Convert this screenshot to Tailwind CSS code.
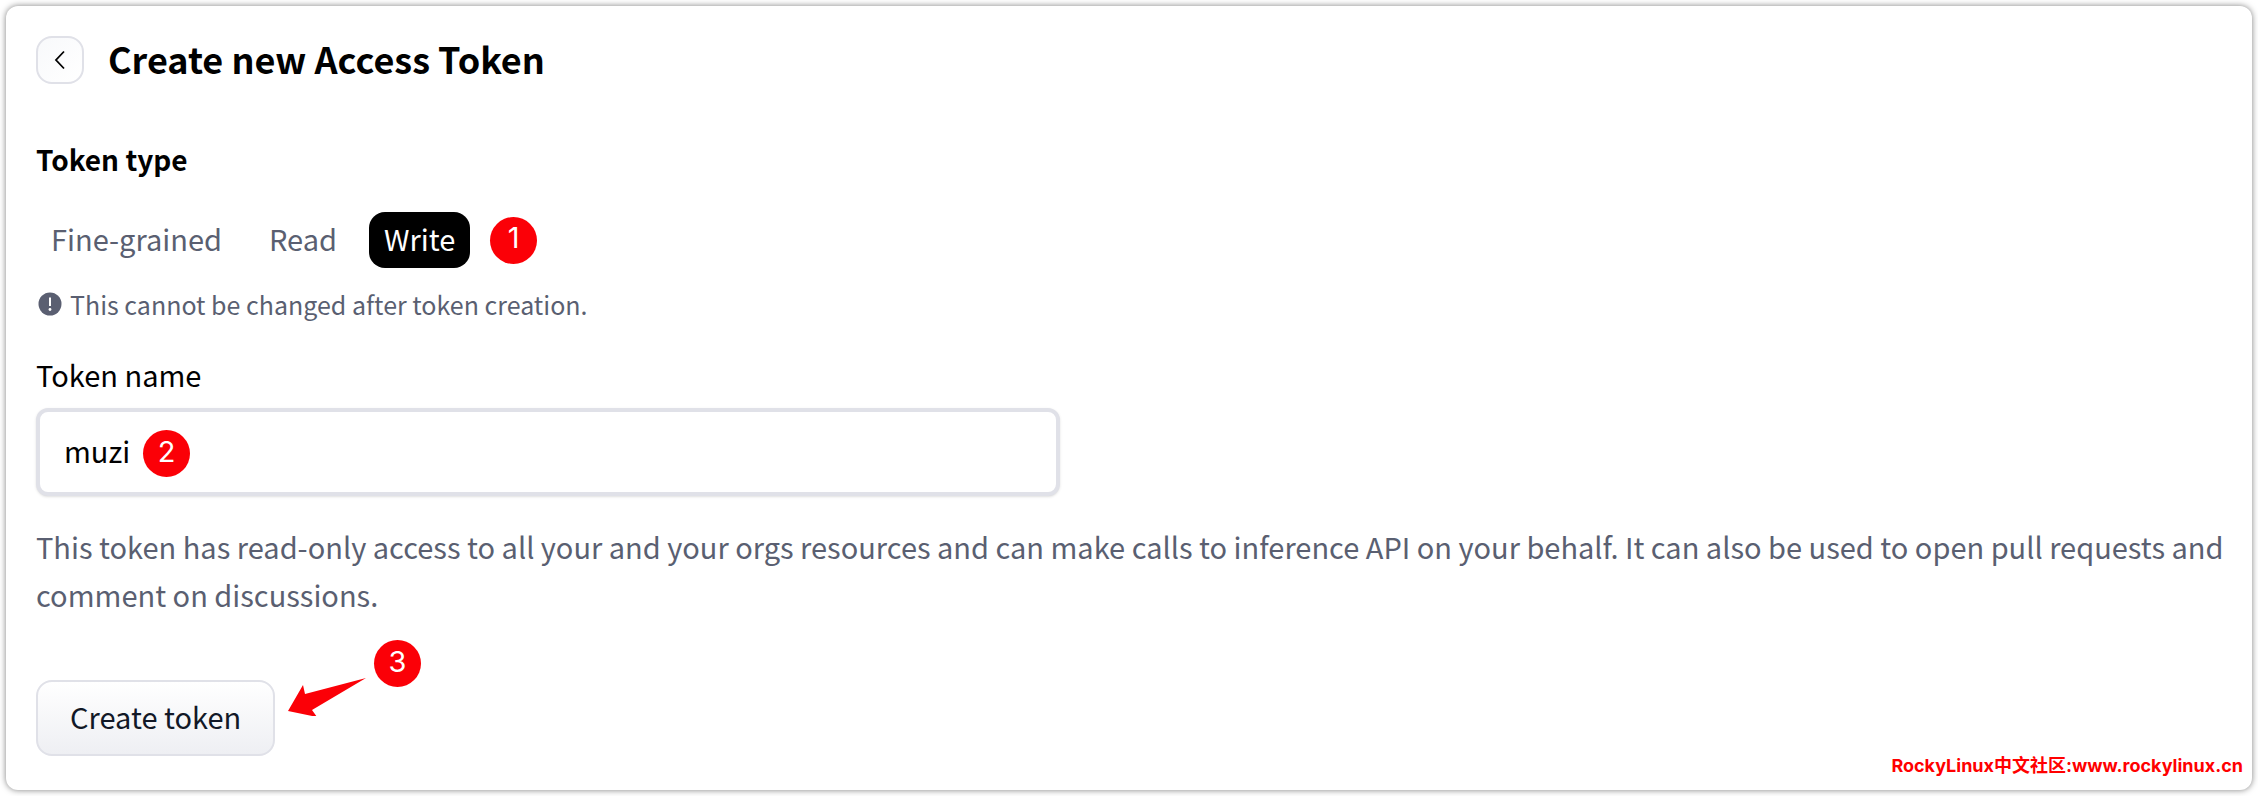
<!DOCTYPE html>
<html lang="en">
<head>
    <meta charset="UTF-8">
    <meta name="viewport" content="width=device-width, initial-scale=1.0">
    <title>Create new Access Token</title>
    <script src="https://cdn.jsdelivr.net/npm/@tailwindcss/browser@4"></script>
</head>
<body class="bg-white min-h-screen p-1.5 font-['Noto_Sans_CJK_SC','Noto_Sans',sans-serif] text-[29px] leading-12 text-black">
    <main class="relative rounded-xl bg-white pt-[30px] pr-6 pb-[34px] pl-[30px] shadow-[0_0_6px_rgba(0,0,0,0.5)]">
        <header class="flex items-center gap-6">
            <a href="#" aria-label="Back" class="flex size-12 items-center justify-center rounded-2xl border-2 border-[#e0e1e8] bg-gradient-to-br from-[#f8f9fb] to-white">
                <svg class="size-6" viewBox="0 0 24 24" fill="none" stroke="black" stroke-width="1.8">
                    <path d="M16 3.5 8 12l8 8.5"/>
                </svg>
            </a>
            <h1 class="pb-1 text-[36px] leading-11 font-bold">Create new Access Token</h1>
        </header>
        <form>
            <h2 class="mt-[51px] text-[28px] leading-12 font-bold">Token type</h2>
            <div class="mt-[29px] flex items-center gap-4">
                <button type="button" class="h-14 rounded-2xl px-[15px] pb-1 text-[#5a5f71]">Fine-grained</button>
                <button type="button" class="h-14 rounded-2xl px-4 pb-1 text-[#5a5f71]">Read</button>
                <button type="button" class="h-14 rounded-2xl bg-black px-[15px] pb-1 text-white">Write</button>
                <span class="ml-1 flex size-[47px] items-center justify-center rounded-full bg-[#fb0007] pb-1 font-[Inter,sans-serif] text-white">1</span>
            </div>
            <p class="mt-4 flex items-center gap-2 text-[25px] leading-10 text-[#5a5f71]">
                <svg class="ml-0.5 size-6" viewBox="0 0 24 24">
                    <circle cx="12" cy="12" r="11.5" fill="#5a5f71"/>
                    <path d="M12 5.5v8.5" stroke="white" stroke-width="2"/>
                    <circle cx="12" cy="17.5" r="1.4" fill="white"/>
                </svg>
                This cannot be changed after token creation.
            </p>
            <label for="tokenName" class="mt-[26px] block">Token name</label>
            <div class="relative mt-2.5 max-w-5xl">
                <input id="tokenName" type="text" value="muzi" class="block h-22 w-full rounded-xl border-4 border-[#e0e1e8] bg-white px-6 pb-1 shadow-sm focus:outline-none">
                <span class="absolute top-[22px] left-[107px] flex size-[47px] items-center justify-center rounded-full bg-[#fb0007] pb-1 font-[Inter,sans-serif] text-white">2</span>
            </div>
            <p class="mt-[26px] text-[#5a5f71]">This token has read-only access to all your and your orgs resources and can make calls to inference API on your behalf. It can also be used to open pull requests and comment on discussions.</p>
            <div class="relative mt-[62px] w-fit">
                <button type="submit" class="block h-[76px] rounded-2xl border-2 border-[#e0e1e8] bg-gradient-to-b from-white to-[#eeeff3] px-8 pb-1 text-[#111827]">Create token</button>
                <svg class="absolute -top-1 left-[252px] h-10 w-[78px]" viewBox="0 0 78 40" fill="#fb0007">
                    <path d="M0 35 15 9l2 9L78 2 24 34l5 7z"/>
                </svg>
                <span class="absolute -top-10 left-[338px] flex size-[47px] items-center justify-center rounded-full bg-[#fb0007] pb-1 font-[Inter,sans-serif] text-white">3</span>
            </div>
        </form>
        <p class="absolute right-[9px] bottom-2 font-[Inter,'Noto_Sans_CJK_SC',sans-serif] text-[18px] leading-8 font-bold text-[#ff0000]">RockyLinux中文社区:www.rockylinux.cn</p>
    </main>
</body>
</html>
